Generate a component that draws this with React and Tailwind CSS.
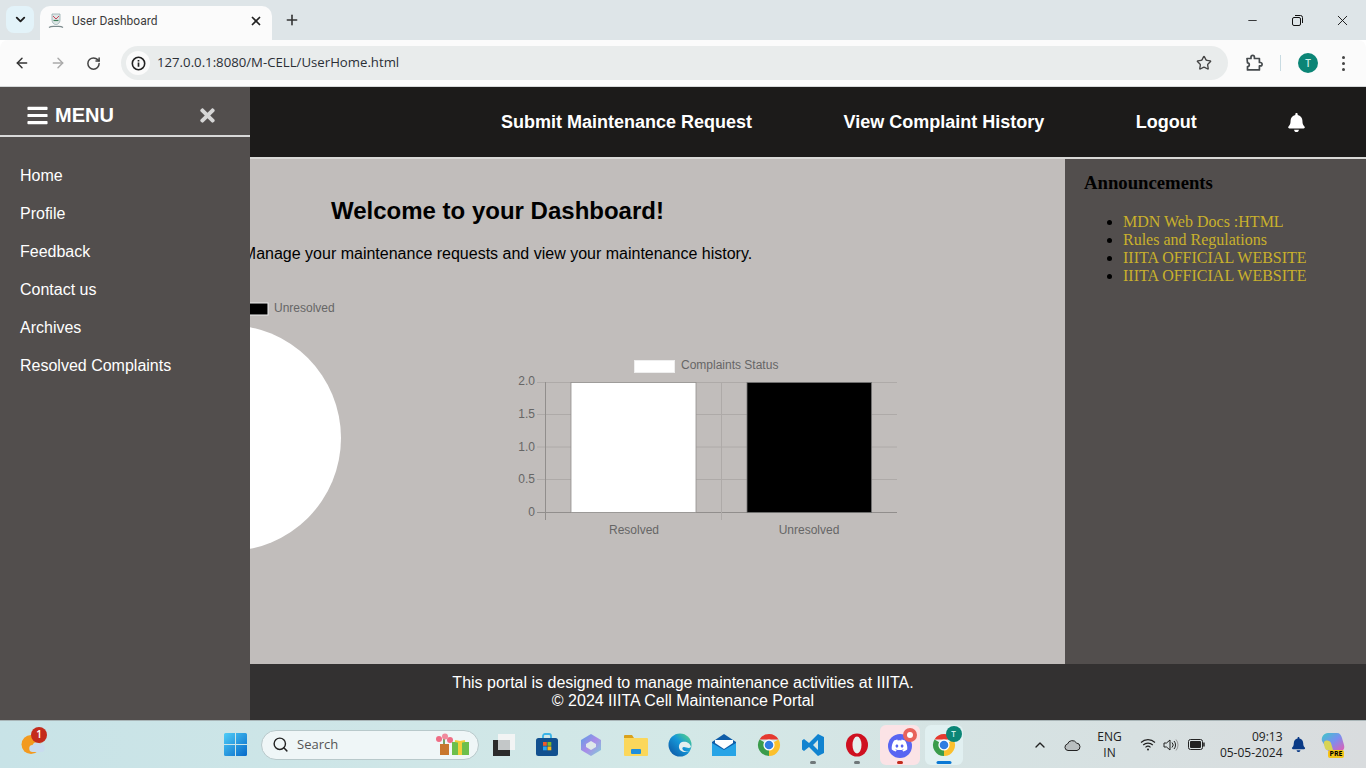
import { ArrowLeft, ArrowRight, RotateCw, Star, X, Plus, ChevronDown, ChevronUp, Search, Minus } from "lucide-react";
import { FaBars, FaTimes, FaBell, FaDiscord } from "react-icons/fa";

const sideLinks = ["Home", "Profile", "Feedback", "Contact us", "Archives", "Resolved Complaints"];
const notices = ["MDN Web Docs :HTML", "Rules and Regulations", "IIITA OFFICIAL WEBSITE", "IIITA OFFICIAL WEBSITE"];

function ChromeLogo({ size = 24 }) {
  return (
    <svg width={size} height={size} viewBox="0 0 24 24">
      <path d="M2.47 6.5A11 11 0 0 1 21.53 6.5L12 6.5z" fill="#e5392f" />
      <path d="M21.53 6.5A11 11 0 0 1 12 23L12 12z" fill="#fbc02d" />
      <path d="M12 23A11 11 0 0 1 2.47 6.5L12 12z" fill="#3a9c4b" />
      <circle cx="12" cy="12" r="5.6" fill="#fff" />
      <circle cx="12" cy="12" r="4.3" fill="#2f7de1" />
    </svg>
  );
}

function Favicon() {
  return (
    <svg width="16" height="16" viewBox="0 0 16 16">
      <path d="M4 1h8v6c0 3-2 4-4 5-2-1-4-2-4-5z" fill="#dfe6e6" stroke="#8aa3a8" strokeWidth=".7" />
      <path d="M5 3l3 3 3-3" fill="none" stroke="#c8475b" strokeWidth="1" />
      <path d="M5.5 7.5h5" stroke="#3f7f5a" strokeWidth="1.2" />
      <path d="M1 14.5c2-1.5 4-1 7-1s5-.5 7 1" fill="none" stroke="#7c8a8c" strokeWidth="1.2" />
    </svg>
  );
}

function ChromeBar() {
  return (
    <div className="shrink-0">
      <div className="h-10 bg-[#dee5e8] flex items-end">
        <div className="ml-[6px] mb-[7px] w-[28px] h-[27px] rounded-lg bg-[#e3f3f9] flex items-center justify-center">
          <ChevronDown size={15} strokeWidth={3} className="text-[#1f1f1f]" />
        </div>
        <div className="ml-[6px] w-[232px] h-[34px] bg-[#fbfbfb] rounded-t-[10px] flex items-center pl-2 pr-2 pb-[5px]">
          <Favicon />
          <span className="ml-2 text-[12px] text-[#3b3b3b] font-['Roboto',sans-serif] whitespace-nowrap">User Dashboard</span>
          <X size={14} strokeWidth={3} className="ml-auto mr-[1px] text-[#222]" />
        </div>
        <Plus size={16} strokeWidth={2.4} className="ml-[12px] mb-[12px] text-[#333]" />
        <div className="ml-auto flex items-center h-10 self-start text-[#111]">
          <Minus size={13} strokeWidth={1.5} className="mr-[33px]" />
          <svg width="11" height="11" viewBox="0 0 11 11" className="mr-[31px]" fill="none" stroke="#111">
            <rect x=".5" y="2.5" width="8" height="8" rx="1.5" />
            <path d="M3 .5h5.5a2 2 0 0 1 2 2V8" />
          </svg>
          <X size={17} strokeWidth={1.3} className="mr-[15px]" />
        </div>
      </div>
      <div className="h-[47px] bg-[#fbfbfb] rounded-t-lg border-b border-[#d5d8d9] flex items-center font-['Open_Sans',sans-serif]">
        <ArrowLeft size={16} strokeWidth={2.2} className="ml-[14px] text-[#333]" />
        <ArrowRight size={16} strokeWidth={2.2} className="ml-[20px] text-[#aaa]" />
        <RotateCw size={15} strokeWidth={2.4} className="ml-[20px] text-[#444]" />
        <div className="ml-[20px] w-[1107px] h-[34px] rounded-full bg-[#e9ecec] flex items-center pl-[5px]">
          <div className="w-6 h-6 rounded-full bg-[#fbfbfb] flex items-center justify-center">
            <svg width="15" height="15" viewBox="0 0 16 16" fill="none">
              <circle cx="8" cy="8" r="6.6" stroke="#222" strokeWidth="1.7" />
              <path d="M8 7v4.4M8 4.2v1.6" stroke="#222" strokeWidth="1.8" />
            </svg>
          </div>
          <span className="ml-[7px] text-[13.2px] text-[#2b2f36] whitespace-nowrap">127.0.0.1:8080/M-CELL/UserHome.html</span>
          <Star size={16} strokeWidth={2} className="ml-auto mr-[16px] text-[#444]" />
        </div>
        <svg width="18" height="18" viewBox="0 0 18 18" fill="none" stroke="#454a4d" strokeWidth="1.7" className="ml-[17px]">
          <path d="M2 4.5h4V3a1.7 1.7 0 0 1 3.4 0v1.5h5v4h1a1.7 1.7 0 0 1 0 3.4h-1v4H2.5v-3.4a1.8 1.8 0 0 0 0-3.6z" strokeLinejoin="round" />
        </svg>
        <div className="ml-[17px] w-px h-4 bg-[#c8dbe2]" />
        <div className="ml-[17px] w-5 h-5 rounded-full bg-[#0b8576] text-[#cdeee8] text-[10px] font-semibold flex items-center justify-center">T</div>
        <div className="ml-[24px] flex flex-col gap-[3px]">
          <span className="w-[3px] h-[3px] rounded-full bg-[#444]" />
          <span className="w-[3px] h-[3px] rounded-full bg-[#444]" />
          <span className="w-[3px] h-[3px] rounded-full bg-[#444]" />
        </div>
      </div>
    </div>
  );
}

function Sidebar() {
  return (
    <aside className="w-[250px] shrink-0 bg-[#524e4d] z-10 text-white">
      <div className="h-[50px] border-b-2 border-[#d9d9d9] flex items-center pl-[26px] pt-[8px]">
        <FaBars size={23} />
        <span className="ml-[6px] text-[20px] font-bold leading-none">MENU</span>
        <FaTimes size={21} className="ml-auto mr-[32px] text-[#d6d6d6]" />
      </div>
      <ul className="mt-[20px]">
        {sideLinks.map((l) => (
          <li key={l} className="h-[38px] pl-5 text-[16px] leading-[38px]">{l}</li>
        ))}
      </ul>
    </aside>
  );
}

function PieChart() {
  return (
    <svg viewBox="250 296 95 256" className="w-[95px] h-[256px] shrink-0">
      <rect x="248" y="303" width="20" height="12" fill="#000" stroke="#eee" strokeWidth="1" />
      <text x="274" y="312" fontSize="12" fill="#666">Unresolved</text>
      <circle cx="228" cy="438" r="113" fill="#fff" />
    </svg>
  );
}

function BarChart() {
  const ticks = [["2.0", 382.5, 384.5], ["1.5", 414.5, 417.5], ["1.0", 447, 451], ["0.5", 479.5, 482.5], ["0", 512.5, 515.5]];
  return (
    <svg viewBox="500 350 410 195" className="w-[410px] h-[195px] shrink-0 ml-[155px] mt-[54px]">
      <rect x="634.5" y="360.5" width="40" height="12" fill="#fff" stroke="#eee" />
      <text x="681" y="369" fontSize="12" fill="#666">Complaints Status</text>
      {ticks.map(([t, y, base]) => (
        <g key={t}>
          <line x1="537" x2="897" y1={y} y2={y} stroke={t === "0" ? "#918e8c" : "#aeaaa8"} />
          <text x="535" y={base} textAnchor="end" fontSize="12" fill="#666">{t}</text>
        </g>
      ))}
      <line x1="545.5" x2="545.5" y1="382" y2="520" stroke="#918e8c" />
      <line x1="721.5" x2="721.5" y1="382" y2="520" stroke="#aeaaa8" />
      <rect x="571" y="382.5" width="125" height="130" fill="#fff" stroke="#918e8c" strokeWidth="0.8" />
      <rect x="747" y="382.5" width="124.5" height="130" fill="#000" stroke="#777" strokeWidth="0.8" />
      <text x="634" y="534" textAnchor="middle" fontSize="12" fill="#666">Resolved</text>
      <text x="809" y="534" textAnchor="middle" fontSize="12" fill="#666">Unresolved</text>
    </svg>
  );
}

function Portal() {
  return (
    <div className="h-[633px] flex font-['Liberation_Sans',sans-serif] shrink-0">
      <Sidebar />
      <div className="flex-1 min-w-0 flex flex-col">
        <header className="h-[70px] shrink-0 bg-[#1c1b1a] text-white text-[18px] font-bold flex items-center pl-[251px] gap-[91.5px] whitespace-nowrap">
          <span>Submit Maintenance Request</span>
          <span>View Complaint History</span>
          <span>Logout</span>
          <FaBell size={19} className="-ml-[1px]" />
        </header>
        <div className="h-[2px] shrink-0 bg-[#d9d9d7]" />
        <div className="flex-1 min-h-0 flex">
          <main className="w-[815px] shrink-0 bg-[#c1bdbb] overflow-hidden">
            <div className="w-[495px] flex flex-col items-center pt-[38px] text-black whitespace-nowrap">
              <h1 className="text-[24px] font-bold leading-[28px]">Welcome to your Dashboard!</h1>
              <p className="mt-[20px] text-[16px] leading-[18px]">Manage your maintenance requests and view your maintenance history.</p>
            </div>
            <div className="flex items-start mt-[33px]">
              <PieChart />
              <BarChart />
            </div>
          </main>
          <section className="flex-1 bg-[#524e4d] pl-[19px] pt-[13px] font-['Liberation_Serif',serif]">
            <h3 className="text-[18.72px] font-bold leading-[21px] text-black">Announcements</h3>
            <ul className="mt-[20px] pl-[39px] list-disc marker:text-black text-[16px] leading-[18px] text-[#c9b12c]">
              {notices.map((n, i) => <li key={i}>{n}</li>)}
            </ul>
          </section>
        </div>
        <footer className="h-[56px] shrink-0 bg-[#333131] text-white text-[16px] leading-[18px] pt-[10px]">
          <div className="w-[866px] text-center">
            <p>This portal is designed to manage maintenance activities at IIITA.</p>
            <p>© 2024 IIITA Cell Maintenance Portal</p>
          </div>
        </footer>
      </div>
    </div>
  );
}

function TaskIcon({ children, className = "w-[44.4px]", dot }) {
  return (
    <div className={"relative h-[40px] flex items-center justify-center shrink-0 " + className}>
      {children}
      {dot && <span className={"absolute bottom-[1px] left-1/2 -translate-x-1/2 h-[3px] rounded-full " + dot} />}
    </div>
  );
}

function Taskbar() {
  return (
    <div className="h-[48px] shrink-0 border-t border-[#a9b5b7] bg-gradient-to-r from-[#c8e3e7] via-[#d3e8e7] to-[#d9dcde] flex items-center font-['Open_Sans',sans-serif] text-[#222]">
      {/* weather */}
      <div className="relative w-[28px] h-[28px] ml-[20px] shrink-0">
        <svg width="26" height="26" viewBox="0 0 26 26" className="mt-[4px]">
          <circle cx="11" cy="9.5" r="9.5" fill="#f39a1f" />
          <path d="M13 17a3.5 3.500 0 0 1-.5-7 4.500 4.500 0 0 1 8-1 4 4 0 0 1 .5 8z" fill="#c9dcef" />
        </svg>
        <span className="absolute -top-[4px] left-[11px] w-4 h-4 rounded-full bg-[#c42b1c] text-white text-[10px] font-semibold flex items-center justify-center">1</span>
      </div>
      {/* windows */}
      <svg width="23" height="23" viewBox="0 0 23 23" className="ml-[176px] shrink-0">
        <defs>
          <linearGradient id="win" x1="0" y1="0" x2="1" y2="1">
            <stop offset="0" stopColor="#4fcdf7" />
            <stop offset="1" stopColor="#0669c9" />
          </linearGradient>
        </defs>
        <path d="M0 1.5A1.5 1.5 0 0 1 1.5 0H11v11H0zM12 0h9.5A1.5 1.5 0 0 1 23 1.5V11H12zM0 12h11v11H1.5A1.5 1.5 0 0 1 0 21.5zM12 12h11v9.5a1.5 1.5 0 0 1-1.5 1.500H12z" fill="url(#win)" />
      </svg>
      {/* search */}
      <div className="ml-[14px] w-[218px] h-[30px] rounded-full bg-[#eff6f7] border border-[#b8c9cb] flex items-center pl-[10px] shrink-0">
        <Search size={17} strokeWidth={2} className="text-[#222]" />
        <span className="ml-[8px] text-[13px] text-[#555]">Search</span>
        <svg width="36" height="24" viewBox="0 0 36 24" className="ml-auto mr-[8px]">
          <rect x="6" y="11" width="9" height="11" fill="#c8762c" />
          <path d="M10 11V6" stroke="#4c8b3a" strokeWidth="1.500" />
          <circle cx="5" cy="6" r="3" fill="#ef6d85" />
          <circle cx="11" cy="3.500" r="3" fill="#f08a9d" />
          <circle cx="16" cy="7" r="3" fill="#ef6d85" />
          <rect x="18" y="9" width="17" height="13" fill="#6cbf4b" />
          <rect x="24" y="9" width="4" height="13" fill="#f3cf3a" />
          <path d="M21 8l5 1 5-1" fill="none" stroke="#f3cf3a" strokeWidth="2" />
        </svg>
      </div>
      {/* pinned apps */}
      <div className="ml-[1px] flex items-center shrink-0">
        <TaskIcon>
          <svg width="24" height="24" viewBox="0 0 24 24" className="translate-x-[2px]">
            <rect x="1" y="7" width="17" height="16" fill="#2b2b2b" />
            <rect x="6" y="1" width="17" height="16" fill="#f2f4f4" />
            <rect x="6" y="7" width="12" height="10" fill="#c3c7c8" />
          </svg>
        </TaskIcon>
        <TaskIcon>
          <svg width="24" height="24" viewBox="0 0 24 24">
            <path d="M8 6V3a2 2 0 0 1 2-2h4a2 2 0 0 1 2 2v3" fill="none" stroke="#3ab4e8" strokeWidth="1.800" />
            <rect x="1" y="5" width="22" height="18" rx="2.500" fill="#12508f" />
            <rect x="8" y="9" width="3.800" height="3.800" fill="#ef5a2a" />
            <rect x="12.500" y="9" width="3.800" height="3.800" fill="#7fba2a" />
            <rect x="8" y="13.500" width="3.800" height="3.800" fill="#2aa4ef" />
            <rect x="12.500" y="13.500" width="3.800" height="3.800" fill="#fdb913" />
          </svg>
        </TaskIcon>
        <TaskIcon>
          <svg width="22" height="24" viewBox="0 0 22 24">
            <defs>
              <linearGradient id="m365" x1="0" y1="0" x2="1" y2="1">
                <stop offset="0" stopColor="#5aa0e6" />
                <stop offset=".5" stopColor="#a98be8" />
                <stop offset="1" stopColor="#7ed0d8" />
              </linearGradient>
            </defs>
            <path d="M11 1l10 6v10l-10 6-10-6V7z" fill="url(#m365)" />
            <path d="M11 8l5 3v3l-5 3-5-3v-3z" fill="#dfe8ea" />
          </svg>
        </TaskIcon>
        <TaskIcon>
          <svg width="25" height="22" viewBox="0 0 25 22">
            <path d="M1 2a1 1 0 0 1 1-1h7l2 3h-10z" fill="#d9a11c" />
            <rect x="1" y="4" width="24" height="18" rx="1" fill="#fbd75b" />
            <rect x="8" y="15" width="10" height="5" rx="1" fill="#1f8fdc" />
          </svg>
        </TaskIcon>
        <TaskIcon>
          <svg width="24" height="24" viewBox="0 0 24 24">
            <defs>
              <linearGradient id="edge" x1="0" y1="1" x2="1" y2="0">
                <stop offset="0" stopColor="#0b4f9e" />
                <stop offset=".55" stopColor="#1597d8" />
                <stop offset="1" stopColor="#5fdc7a" />
              </linearGradient>
            </defs>
            <circle cx="12" cy="12" r="11.500" fill="url(#edge)" />
            <path d="M23 14c-1-5-6-6-9-5-3 1-4 5-2 8 2 2 6 3 9 1-3 1-5 0-6-1s-1-3 1-3 5 2 7 0z" fill="#e4efef" />
          </svg>
        </TaskIcon>
        <TaskIcon>
          <svg width="24" height="24" viewBox="0 0 24 24">
            <path d="M12 1l12 8v14H0V9z" fill="#0f5da8" />
            <path d="M0 10l12 7 12-7v13H0z" fill="#27a4e6" />
            <path d="M3 7h18v3l-9 6-9-6z" fill="#fff" />
          </svg>
        </TaskIcon>
        <TaskIcon><ChromeLogo /></TaskIcon>
        <TaskIcon dot="w-[6px] bg-[#6f7779]">
          <svg width="24" height="24" viewBox="0 0 24 24">
            <path d="M17 1l6 3v16l-6 3-9-9-5 4-2-1.500v-9l2-1.500 5 4zM17 7l-5 5 5 5z" fill="#1183d0" />
          </svg>
        </TaskIcon>
        <TaskIcon dot="w-[6px] bg-[#6f7779]">
          <svg width="24" height="24" viewBox="0 0 24 24">
            <ellipse cx="12" cy="12" rx="11" ry="11.500" fill="#cf1020" />
            <ellipse cx="12" cy="12" rx="4.500" ry="8.500" fill="#e6efee" />
          </svg>
        </TaskIcon>
        <TaskIcon className="rounded-md bg-[#fbe3e6] w-[40px] mr-[2px]" dot="w-[6px] bg-[#c42b1c]">
          <div className="w-6 h-6 rounded-full bg-[#5865f2] flex items-center justify-center text-white mt-[2px]">
            <FaDiscord size={17} />
          </div>
          <span className="absolute top-[3px] right-[3px] w-[14px] h-[14px] rounded-full bg-[#e8635c] flex items-center justify-center">
            <span className="w-[6px] h-[6px] rounded-full bg-white" />
          </span>
        </TaskIcon>
        <TaskIcon className="rounded-md bg-[#e1f0f1] w-[38px] ml-[3px]" dot="w-[15px] bg-[#0a78d4]">
          <ChromeLogo />
          <span className="absolute top-[1px] right-[1px] w-[16px] h-[16px] rounded-full bg-[#0b8576] text-[#cdeee8] text-[8px] font-semibold flex items-center justify-center">T</span>
        </TaskIcon>
      </div>
      {/* tray */}
      <ChevronUp size={16} strokeWidth={2} className="ml-[69px] shrink-0" />
      <svg width="17" height="12" viewBox="0 0 17 12" className="ml-[16px] shrink-0">
        <path d="M4 11.500a3.300 3.300 0 0 1-.5-6.500 5 5 0 0 1 9-1 3.800 3.800 0 0 1 .5 7.500z" fill="#b9bfc0" stroke="#222" strokeWidth="1" />
      </svg>
      <div className="ml-[9px] w-[40px] text-center text-[12px] leading-[16px] shrink-0">
        <p>ENG</p>
        <p>IN</p>
      </div>
      <svg width="16" height="13" viewBox="0 0 16 13" fill="none" stroke="#222" strokeWidth="1.100" className="ml-[10px] shrink-0">
        <path d="M1 4.500a10 10 0 0 1 14 0M3.200 7a7 7 0 0 1 9.600 0M5.500 9.300a3.600 3.600 0 0 1 5 0" />
        <circle cx="8" cy="11.500" r="1" fill="#222" stroke="none" />
      </svg>
      <svg width="16" height="14" viewBox="0 0 16 14" fill="none" stroke="#222" strokeWidth="1" className="ml-[7px] shrink-0">
        <path d="M1 5v4h2.500L7 12V2L3.500 5z" />
        <path d="M9 4.500a3.500 3.500 0 0 1 0 5M11 3a6 6 0 0 1 0 8" />
        <path d="M13 1.500a8.500 8.500 0 0 1 0 11" stroke="#999" />
      </svg>
      <svg width="17" height="11" viewBox="0 0 17 11" className="ml-[9px] shrink-0">
        <rect x=".5" y=".5" width="14" height="10" rx="2" fill="none" stroke="#222" />
        <rect x="2" y="2" width="11" height="7" rx="1" fill="#222" />
        <rect x="15.200" y="3.500" width="1.500" height="4" fill="#222" />
      </svg>
      <div className="ml-[14px] w-[64px] text-right text-[12px] leading-[16px] whitespace-nowrap shrink-0">
        <p>09:13</p>
        <p>05-05-2024</p>
      </div>
      <FaBell size={15} className="ml-[8px] text-[#0a3a86] shrink-0" />
      <div className="relative ml-[15px] w-[24px] h-[26px] shrink-0">
        <svg width="24" height="22" viewBox="0 0 24 22">
          <defs>
            <linearGradient id="cop" x1="0" y1="0" x2="1" y2="1">
              <stop offset="0" stopColor="#3cc8c8" />
              <stop offset=".5" stopColor="#7a8ff0" />
              <stop offset="1" stopColor="#e85bb0" />
            </linearGradient>
          </defs>
          <path d="M7 1h9c3 0 4 2 5 5l2 7c1 4-1 6-4 6h-10c-3 0-4-2-5-5L1 9C0 5 3 1 7 1z" fill="url(#cop)" />
          <path d="M3 10c2-2 5-2 7 1l2 7H6c-2 0-3-4-3-8z" fill="#d8d455" />
        </svg>
        <span className="absolute bottom-[0px] left-[7px] h-[8px] px-[2px] bg-[#f5c518] rounded-[2px] text-[7px] leading-[8px] font-bold text-black">PRE</span>
      </div>
    </div>
  );
}

export default function App() {
  return (
    <div className="w-[1366px] h-[768px] overflow-hidden flex flex-col bg-white">
      <ChromeBar />
      <Portal />
      <Taskbar />
    </div>
  );
}
